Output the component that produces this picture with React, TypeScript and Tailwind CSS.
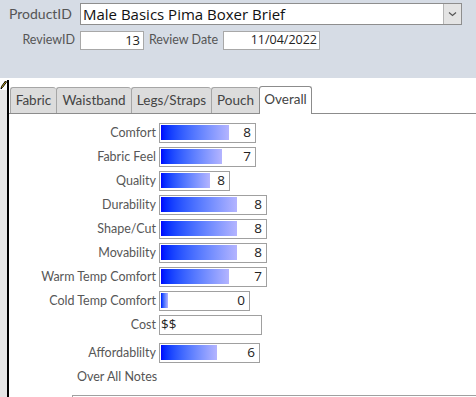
import React from "react";

interface Rating {
  label: string;
  box: number;
  fill?: number;
  value: string;
  left?: boolean;
}

const ratings: Rating[] = [
  { label: "Comfort", box: 97, fill: 68, value: "8" },
  { label: "Fabric Feel", box: 97, fill: 61, value: "7" },
  { label: "Quality", box: 71, fill: 49, value: "8" },
  { label: "Durability", box: 108, fill: 76, value: "8" },
  { label: "Shape/Cut", box: 108, fill: 76, value: "8" },
  { label: "Movability", box: 108, fill: 76, value: "8" },
  { label: "Warm Temp Comfort", box: 108, fill: 68, value: "7" },
  { label: "Cold Temp Comfort", box: 91, fill: 7, value: "0" },
  { label: "Cost", box: 103, value: "$$", left: true },
];

const tabs = [
  { name: "Fabric", w: 46 },
  { name: "Waistband", w: 75 },
  { name: "Legs/Straps", w: 80 },
  { name: "Pouch", w: 48 },
];

const valueFont = { fontFamily: "'Open Sans', sans-serif" };

function RatingRow({ r }: { r: Rating }) {
  return (
    <div className="flex items-center h-[20px]">
      <div className="w-[150px] pr-[3px] text-right text-[12.5px] text-[#575757] leading-none whitespace-nowrap">
        {r.label}
      </div>
      <div
        className="relative h-[20px] border border-[#a0a0a0] bg-white"
        style={{ width: r.box }}
      >
        {r.fill !== undefined && (
          <div
            className="absolute left-[1px] top-[1px] bottom-[2px] bg-linear-to-r from-[#0000ff] to-[#b4b4ff]"
            style={{ width: r.fill }}
          />
        )}
        <div
          className={`relative h-full flex items-center text-[13.5px] text-[#222] leading-none ${
            r.left ? "justify-start pl-[1px]" : "justify-end pr-[4px]"
          }`}
          style={valueFont}
        >
          {r.value}
        </div>
      </div>
    </div>
  );
}

export default function App() {
  return (
    <div
      className="w-[476px] h-[397px] overflow-hidden bg-white"
      style={{ fontFamily: "Lato, 'Open Sans', sans-serif" }}
    >
      {/* header */}
      <div className="h-[78px] bg-[#d6dce5] pt-[3px]">
        <div className="flex items-center h-[22px]">
          <div className="w-[80px] pl-[9px] text-[14px] text-[#555] leading-none">
            ProductID
          </div>
          <div className="flex w-[382px] h-[22px] border border-[#8e8e8e] bg-white">
            <div
              className="flex-1 pl-[2px] flex items-center text-[15px] text-[#111] leading-none"
              style={valueFont}
            >
              Male Basics Pima Boxer Brief
            </div>
            <div className="w-[18px] h-full bg-[#e4e4e4] border-l border-[#b5b5b5] flex items-center justify-center">
              <svg width="9" height="6" viewBox="0 0 9 6">
                <path d="M1 1.5 L4.5 4.5 L8 1.5" fill="none" stroke="#555" strokeWidth="1.2" />
              </svg>
            </div>
          </div>
        </div>
        <div className="flex items-center h-[19px] mt-[6px]">
          <div className="w-[77px] pr-[2px] text-right text-[12.5px] text-[#555] leading-none">
            ReviewID
          </div>
          <div
            className="ml-[3px] w-[64px] h-[19px] border border-[#a8a8a8] bg-white flex items-center justify-end pr-[3px] text-[13px] text-[#222] leading-none"
            style={valueFont}
          >
            13
          </div>
          <div className="w-[79px] text-center text-[12.5px] text-[#555] leading-none">
            Review Date
          </div>
          <div
            className="w-[97px] h-[19px] border border-[#a8a8a8] bg-white flex items-center justify-end pr-[2px] text-[12.5px] text-[#222] leading-none"
            style={valueFont}
          >
            11/04/2022
          </div>
        </div>
      </div>

      {/* body */}
      <div className="flex h-[319px] pt-[2px]">
        <div className="w-[9px] flex flex-col border-r-2 border-black">
          <div className="h-[10px] bg-white">
            <svg width="7" height="10" viewBox="0 0 7 10">
              <path d="M1 9 L1.5 6.5 L5.5 1 L6.5 2 L2.5 7.5 Z" fill="#f5d020" stroke="#000" strokeWidth="1" />
            </svg>
          </div>
          <div className="flex-1 bg-[#e6e6e6]" />
        </div>

        <div className="flex-1 flex flex-col">
          {/* tabs */}
          <div className="flex items-end h-[34px] border-b border-[#8c8c8c] pl-[1px]">
            {tabs.map((t) => (
              <div
                key={t.name}
                className="h-[26px] bg-[#dcdcdc] border-t border-l border-[#a6a6a6] rounded-t-[3px] flex items-center justify-center text-[13.5px] text-[#444] leading-none"
                style={{ width: t.w }}
              >
                {t.name}
              </div>
            ))}
            <div className="w-[53px] h-[28px] -mb-px bg-white border-t border-x border-[#8c8c8c] rounded-t-[3px] flex items-center justify-center text-[13.5px] text-[#444] leading-none pb-[1px]">
              Overall
            </div>
          </div>

          <div className="flex flex-col gap-[4px] pt-[9px]">
            {ratings.map((r) => (
              <RatingRow key={r.label} r={r} />
            ))}
            <div className="mt-[4px]">
              <RatingRow r={{ label: "Affordablilty", box: 101, fill: 56, value: "6" }} />
            </div>
          </div>

          <div className="pl-[68px] mt-[8px] text-[12.5px] text-[#555] leading-none">
            Over All Notes
          </div>
          <div className="ml-[63px] mt-[11px] flex-1 border-t border-l border-[#a0a0a0]" />
        </div>
      </div>
    </div>
  );
}
